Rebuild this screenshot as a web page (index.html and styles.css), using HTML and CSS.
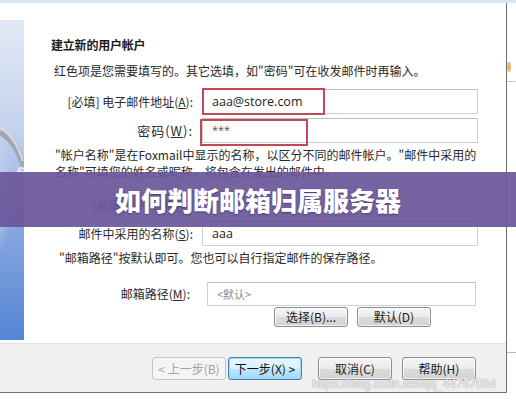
FILE: index.html
```html
<!DOCTYPE html>
<html lang="zh-CN">
<head>
<meta charset="utf-8">
<title>如何判断邮箱归属服务器</title>
<link rel="stylesheet" href="styles.css">
</head>
<body>
<div class="page">
  <div class="topstrip"></div>
  <div class="frame">
    <div class="dialog">
      <div class="body">
        <div class="art">
          <svg width="24" height="320" viewBox="0 0 24 320">
            <defs>
              <linearGradient id="bg" x1="0" y1="0" x2="0" y2="1">
                <stop offset="0" stop-color="#e2e9f5"/>
                <stop offset="0.35" stop-color="#c3d2ed"/>
                <stop offset="0.6" stop-color="#8fabe0"/>
                <stop offset="1" stop-color="#5585d6"/>
              </linearGradient>
              <radialGradient id="sph" cx="0.1" cy="0.45" r="0.6">
                <stop offset="0" stop-color="#d6e0f3"/>
                <stop offset="1" stop-color="#d6e0f3" stop-opacity="0"/>
              </radialGradient>
            </defs>
            <rect width="24" height="320" fill="url(#bg)"/>
            <rect x="-20" y="120" width="50" height="120" fill="url(#sph)"/>
            <path d="M0 112 Q16 120 24 148" fill="none" stroke="#a2a7b2" stroke-width="6"/>
            <path d="M0 108 Q15 116 23 141" fill="none" stroke="#d7dae0" stroke-width="2"/>
            <text x="16" y="157" font-family="Liberation Sans, sans-serif" font-size="15" font-weight="bold" font-style="italic" fill="#e9eff9">6</text>
          </svg>
        </div>
        <div class="form">
          <div class="title">建立新的用户帐户</div>
          <div class="desc">红色项是您需要填写的。其它选填，如"密码"可在收发邮件时再输入。</div>
          <div class="row first">
            <label class="lbl">[必填] 电子邮件地址(<u>A</u>):</label>
            <div class="field"><span class="val">aaa@store.com</span><span class="mark mark-email"></span></div>
          </div>
          <div class="row">
            <label class="lbl pw">密码(<u>W</u>):</label>
            <div class="field"><span class="val stars">***</span><span class="mark mark-pw"></span></div>
          </div>
          <p class="para">"帐户名称"是在Foxmail中显示的名称，以区分不同的邮件帐户。"邮件中采用的名称"可填您的姓名或昵称，将包含在发出的邮件中。</p>
          <div class="row r3">
            <label class="lbl">[必填] 帐户名称(<u>Y</u>):</label>
            <div class="field"><span class="val"></span></div>
          </div>
          <div class="row">
            <label class="lbl">邮件中采用的名称(<u>S</u>):</label>
            <div class="field"><span class="val">aaa</span></div>
          </div>
          <p class="para para2">"邮箱路径"按默认即可。您也可以自行指定邮件的保存路径。</p>
          <div class="row path">
            <label class="lbl">邮箱路径(<u>M</u>):</label>
            <div class="field"><span class="val hint">&lt;默认&gt;</span></div>
          </div>
          <div class="pathbtns">
            <button class="btn small">选择(B)...</button>
            <button class="btn small">默认(D)</button>
          </div>
        </div>
      </div>
      <div class="buttonbar">
        <button class="btn disabled">&lt; 上一步(B)</button>
        <button class="btn default">下一步(X) &gt;</button>
        <button class="btn gap">取消(C)</button>
        <button class="btn">帮助(H)</button>
      </div>
    </div>
    <div class="edge">
      <svg width="9" height="397" viewBox="0 0 9 397">
        <ellipse cx="2" cy="64" rx="2" ry="5" fill="#e8b878"/>
        <rect x="0" y="78" width="9" height="1" fill="#c9c9c9"/>
        <rect x="0" y="349" width="9" height="1" fill="#b8b8b8"/>
      </svg>
    </div>
  </div>
  <div class="banner">如何判断邮箱归属服务器</div>
  <div class="watermark">https://blog.csdn.net/qq_44757034</div>
</div>
</body>
</html>
```

FILE: styles.css
```css
* { box-sizing: border-box; }
html, body { margin: 0; padding: 0; background: #ffffff; }
body {
  width: 516px;
  height: 400px;
  overflow: hidden;
  font-family: "Noto Sans CJK SC", "Liberation Sans", sans-serif;
  font-size: 12px;
  color: #222;
}
.page { position: relative; width: 516px; height: 400px; }
.topstrip { height: 3px; background: #dae5f2; }
.frame { display: flex; }
.dialog {
  width: 507px;
  height: 390px;
  border-right: 1px solid #6f6f6f;
  border-bottom: 1px solid #6f6f6f;
  display: flex;
  flex-direction: column;
  background: #ffffff;
}
.body { display: flex; height: 340px; }
.art { width: 24px; height: 320px; margin-top: 17px; flex: none; }
.art svg { display: block; }
.form { flex: 1; padding: 34px 0 0 27px; }
.title { font-weight: bold; line-height: 16px; color: #1a1a1a; letter-spacing: -0.2px; }
.desc { margin: 10px 0 0 3px; line-height: 16px; color: #2a2a2a; white-space: nowrap; }
.row {
  display: grid;
  grid-template-columns: 142px 276px;
  column-gap: 9px;
  align-items: center;
  height: 25px;
  margin-top: 4px;
}
.row.first { margin-top: 10px; }
.row.r3 { margin-top: 12px; }
.lbl { text-align: right; white-space: nowrap; color: #2a2a2a; line-height: 16px; }
.lbl.pw { font-size: 13px; letter-spacing: 1px; }
.field {
  position: relative;
  height: 25px;
  border: 1px solid #cdd2d8;
  border-top-color: #b9bec5;
  background: #fff;
  display: flex;
  align-items: center;
  padding-left: 9px;
}
.val { font-family: "Open Sans", "Liberation Sans", sans-serif; font-size: 12.5px; color: #1e1e1e; }
.val.stars { font-size: 11px; align-self: flex-start; margin-top: 3px; color: #555; }
.val.hint { font-family: "Noto Sans CJK SC", sans-serif; font-size: 11px; color: #8a8a8a; }
.mark {
  position: absolute;
  border: 2px solid #c24a55;
}
.mark-email { left: -1px; top: -2px; width: 123px; height: 27px; }
.mark-pw { left: -3px; top: 0px; width: 108px; height: 27px; }
.para { margin: 3px 0 0 4px; width: 430px; line-height: 17px; color: #2a2a2a; }
.para2 { margin-left: 8px; }
.row.path {
  grid-template-columns: 139px 269px;
  column-gap: 17px;
  height: 24px;
  margin-top: 16px;
}
.row.path .field { height: 24px; }
.pathbtns { display: flex; gap: 9px; margin: 1px 0 0 223px; }
.btn {
  width: 74px;
  height: 23px;
  padding: 0;
  border: 1px solid #8e8e8e;
  border-radius: 3px;
  background: linear-gradient(#f5f5f5 0%, #ebebeb 50%, #dcdcdc 51%, #d2d2d2 100%);
  font-family: "Noto Sans CJK SC", "Liberation Sans", sans-serif;
  font-size: 12px;
  color: #222;
  box-shadow: inset 0 0 0 1px rgba(255,255,255,0.7);
}
.btn.small { height: 20px; line-height: 16px; }
.buttonbar {
  height: 49px;
  background: #f0f0f0;
  border-top: 1px solid #e2e2e2;
  display: flex;
  align-items: flex-start;
  padding: 13px 0 0 152px;
  gap: 2px;
}
.btn.disabled {
  border-color: #c6c6c6;
  background: #f4f4f4;
  color: #a2a2a2;
  box-shadow: none;
}
.btn.default {
  border-color: #3c80b4;
  background: linear-gradient(#eaf6fd 0%, #d9f0fc 50%, #bee6fd 51%, #a7d9f5 100%);
  box-shadow: inset 0 0 0 1px #9fd8f5;
  color: #111;
}
.btn.gap { margin-left: 14px; margin-right: 8px; }
.edge { width: 9px; }
.edge svg { display: block; }
.banner {
  position: absolute;
  left: 0;
  top: 172px;
  width: 516px;
  height: 55px;
  background: rgba(106, 86, 154, 0.92);
  color: #ffffff;
  font-family: "Noto Sans CJK SC", sans-serif;
  font-weight: 900;
  font-size: 26px;
  line-height: 55px;
  text-align: center;
  text-shadow: 0 1px 2px rgba(40, 20, 70, 0.5);
}
.watermark {
  position: absolute;
  left: 312px;
  top: 377px;
  font-family: "Liberation Sans", sans-serif;
  font-size: 12px;
  color: rgba(255,255,255,0.85);
  text-shadow: 0 0 1px rgba(0,0,0,0.35), 0 0 2px rgba(0,0,0,0.2);
  white-space: nowrap;
}
```
